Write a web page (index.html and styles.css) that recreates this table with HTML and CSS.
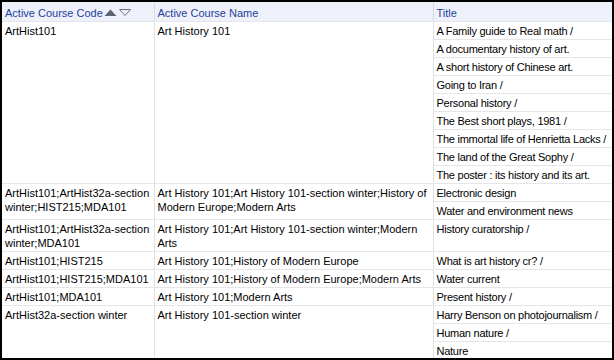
FILE: index.html
```html
<!DOCTYPE html>
<html>
<head>
<meta charset="utf-8">
<link rel="stylesheet" href="styles.css">
</head>
<body>
<div class="frame">
<table class="grid">
<colgroup><col class="c1"><col class="c2"><col class="c3"></colgroup>
<thead>
<tr>
<th><span class="hcell">Active Course Code<span class="sort"><svg width="28" height="9" viewBox="0 0 28 9"><polygon points="0.5,8 6.5,1.5 12.5,8" fill="#5b6577"/><polygon points="15.5,1.5 26.5,1.5 21,7.5" fill="none" stroke="#6b7384" stroke-width="1"/></svg></span></span></th>
<th>Active Course Name</th>
<th>Title</th>
</tr>
</thead>
<tbody>
<tr><td rowspan="9">ArtHist101</td><td rowspan="9">Art History 101</td><td class="t">A Family guide to Real math /</td></tr>
<tr><td class="t">A documentary history of art.</td></tr>
<tr><td class="t">A short history of Chinese art.</td></tr>
<tr><td class="t">Going to Iran /</td></tr>
<tr><td class="t">Personal history /</td></tr>
<tr><td class="t">The Best short plays, 1981 /</td></tr>
<tr><td class="t">The immortal life of Henrietta Lacks /</td></tr>
<tr><td class="t">The land of the Great Sophy /</td></tr>
<tr><td class="t">The poster : its history and its art.</td></tr>
<tr><td rowspan="2">ArtHist101;ArtHist32a-section winter;HIST215;MDA101</td><td rowspan="2">Art History 101;Art History 101-section winter;History of Modern Europe;Modern Arts</td><td class="t">Electronic design</td></tr>
<tr><td class="t">Water and environment news</td></tr>
<tr><td>ArtHist101;ArtHist32a-section winter;MDA101</td><td>Art History 101;Art History 101-section winter;Modern Arts</td><td class="t">History curatorship /</td></tr>
<tr><td>ArtHist101;HIST215</td><td>Art History 101;History of Modern Europe</td><td class="t">What is art history cr? /</td></tr>
<tr><td>ArtHist101;HIST215;MDA101</td><td>Art History 101;History of Modern Europe;Modern Arts</td><td class="t">Water current</td></tr>
<tr><td>ArtHist101;MDA101</td><td>Art History 101;Modern Arts</td><td class="t">Present history /</td></tr>
<tr><td rowspan="3">ArtHist32a-section winter</td><td rowspan="3">Art History 101-section winter</td><td class="t">Harry Benson on photojournalism /</td></tr>
<tr><td class="t">Human nature /</td></tr>
<tr><td class="t">Nature</td></tr>
</tbody>
</table>
</div>
</body>
</html>
```

FILE: styles.css
```css
html, body {
  margin: 0;
  padding: 0;
  background: #ffffff;
}
.frame {
  width: 614px;
  height: 360px;
  box-sizing: border-box;
  border: 2px solid #000000;
  overflow: hidden;
  background: #ffffff;
}
.grid {
  width: 610px;
  table-layout: fixed;
  border-collapse: collapse;
  font-family: "Liberation Sans", Arial, sans-serif;
  font-size: 11px;
  line-height: 14px;
  color: #000000;
}
.c1 { width: 152px; }
.c2 { width: 279px; }
.c3 { width: 179px; }
.grid th {
  background: #eef1f9;
  color: #1f3f9f;
  font-weight: normal;
  text-align: left;
  padding: 4px 3px 1px 3px;
  border-right: 1px solid #d6dbe6;
  border-bottom: 1px solid #e2e6ef;
  white-space: nowrap;
  vertical-align: top;
}
.hcell {
  display: inline-flex;
  align-items: center;
}
.sort {
  display: inline-flex;
  margin-left: 1px;
  margin-top: -2px;
}
.grid td {
  padding: 2px 3px 1px 3px;
  vertical-align: top;
  border-right: 1px solid #e1e1e1;
  border-bottom: 1px solid #e6e6e6;
}
.grid td.t {
  white-space: nowrap;
  letter-spacing: -0.25px;
  overflow: hidden;
}
.grid th:last-child,
.grid td:last-child {
  border-right: none;
}
```
